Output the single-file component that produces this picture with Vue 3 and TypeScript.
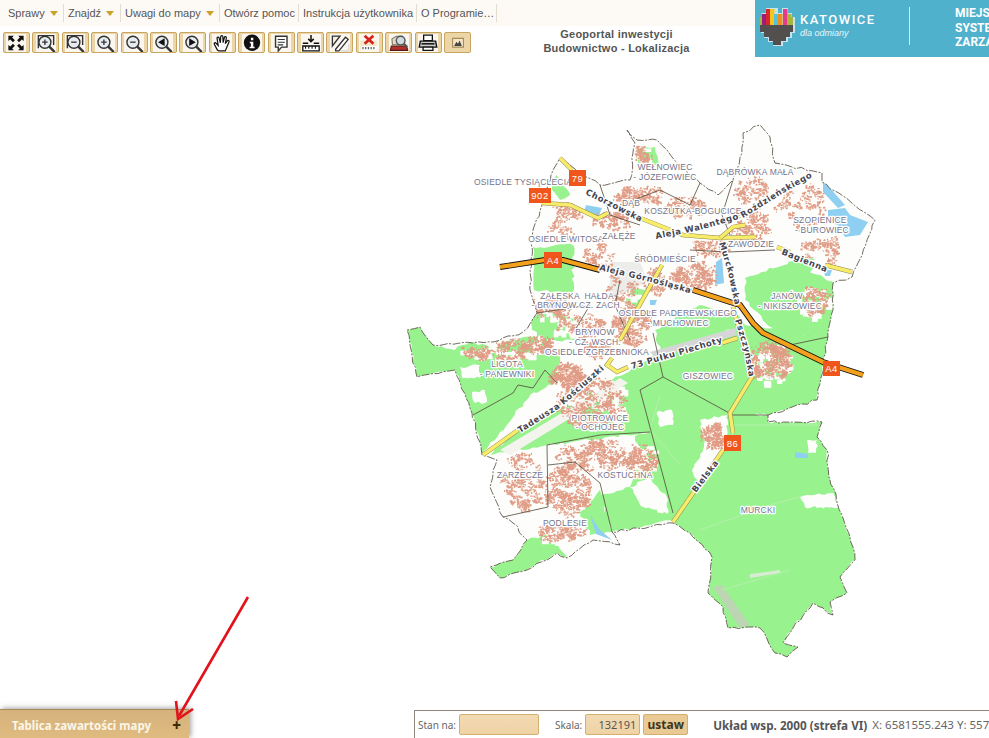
<script setup lang="ts">
interface Shape { d: string; fill?: string; stroke?: string; w?: number }
interface Tool { name: string; shapes: Shape[]; small?: boolean }

const menu = [
  { label: 'Sprawy', arrow: true, w: 64 },
  { label: 'Znajdź', arrow: true, w: 57 },
  { label: 'Uwagi do mapy', arrow: true, w: 99 },
  { label: 'Otwórz pomoc', arrow: false, w: 79 },
  { label: 'Instrukcja użytkownika', arrow: false, w: 118 },
  { label: 'O Programie…', arrow: false, w: 80 },
]

function ring(cx: number, cy: number, r: number) {
  return `M${cx - r} ${cy}a${r} ${r} 0 1 0 ${r * 2} 0a${r} ${r} 0 1 0 ${-r * 2} 0z`
}

const glass: Shape[] = [
  { d: ring(8, 7.5, 5.5), fill: '#e6ecef', stroke: '#333', w: 1.3 },
  { d: 'M12 11.5l5 5', stroke: '#333', w: 2.2 },
]
const plus: Shape = { d: 'M5.5 7.5h5M8 5v5', stroke: '#333', w: 1.2 }
const minus: Shape = { d: 'M5.5 7.5h5', stroke: '#333', w: 1.2 }
const corners: Shape = { d: 'M2 13V1.500h14V10', stroke: '#333', w: 1.3 }

const tools: Tool[] = [
  { name: 'Pełny zasięg', shapes: [
    { d: 'M2 1.500h5L5.500 3.200 8 5.700 6.200 7.500 3.700 5 2 6.500zM16 1.500v5L14.300 5 11.800 7.500 10 5.700l2.500-2.500L11 1.500zM2 15v-5l1.700 1.500L6.200 9 8 10.800 5.500 13.300 7 15zM16 15h-5l1.500-1.700L10 10.800 11.800 9l2.500 2.500L16 10z', fill: '#111' },
  ] },
  { name: 'Powiększ obszar', shapes: [corners, ...glass, plus] },
  { name: 'Pomniejsz obszar', shapes: [corners, ...glass, minus] },
  { name: 'Powiększ', shapes: [...glass, plus] },
  { name: 'Pomniejsz', shapes: [...glass, minus] },
  { name: 'Poprzedni widok', shapes: [...glass, { d: 'M10.500 4v7L4.500 7.500z', fill: '#111' }] },
  { name: 'Następny widok', shapes: [...glass, { d: 'M5.500 4v7l6-3.500z', fill: '#111' }] },
  { name: 'Przesuń', shapes: [
    { d: 'M5 15 2 9.500c-.6-1.300.8-2 1.600-1L5.500 10.500 4.500 4c-.2-1.400 1.600-1.600 1.900-.3L7.500 8 7.800 2.500c.1-1.400 1.900-1.400 2 0L10 8l1.200-4.800c.3-1.300 2-1 1.800.4L12 8.800l1.800-2.500c.8-1 2.200-.2 1.600 1L13 13l-1 2.500H6z', fill: '#fff', stroke: '#111', w: 1.1 },
  ] },
  { name: 'Informacja', shapes: [
    { d: ring(9, 8, 7.500), fill: '#111' },
    { d: 'M8 3.500h2.200v2.200H8zM7 7.200h3.200v4.500h1.200v1.300H6.800v-1.300H8V8.500H7z', fill: '#fff' },
  ] },
  { name: 'Opis', shapes: [
    { d: 'M4 2h10.500v10H9.500l-3 3.500V12H4z', fill: '#fff', stroke: '#333', w: 1.300 },
    { d: 'M6 5h6.500M6 7.500h6.500M6 10h5', stroke: '#333', w: 1 },
  ] },
  { name: 'Pomiar', shapes: [
    { d: 'M9 1v6M6.500 4.500 9 7l2.500-2.500', stroke: '#111', w: 1.400 },
    { d: 'M1.500 8.500h5M11.500 8.500h5', stroke: '#111', w: 1.400 },
    { d: 'M1.500 11h15v4.500h-15z', fill: '#fff', stroke: '#111', w: 1.200 },
    { d: 'M4 11v2.500M7 11v2.500M10 11v2.500M13 11v2.500', stroke: '#111', w: 1 },
  ] },
  { name: 'Edycja', shapes: [
    { d: 'M2 2h7L2 11z', fill: '#f5efe0', stroke: '#333', w: 1.200 },
    { d: 'M5 14 14 3l2.500 2L8 15.500H5z', fill: '#fff', stroke: '#333', w: 1.200 },
    { d: 'M10 15.500h7v-6', stroke: '#ddd', w: 1.500 },
  ] },
  { name: 'Usuń', shapes: [
    { d: 'M1 6h15v9H1z', fill: '#f4e8c8' },
    { d: 'M2 11h14v4H2z', fill: '#fff' },
    { d: 'M3.500 12v2M6 12v2M8.500 12v2M11 12v2M13.500 12v2', stroke: '#666', w: 1.200 },
    { d: 'M5 1.500 13 9M13 1.500 5 9', stroke: '#d8201c', w: 2.500 },
  ] },
  { name: 'Wydruk podglądu', shapes: [
    { d: 'M2 11h14l1 4H1z', fill: '#b1302c', stroke: '#5a1a18', w: 1 },
    { d: 'M2.500 4.500 6.500 2H12l1 8H3z', fill: '#e5dcc8', stroke: '#776', w: 1 },
    { d: ring(10.500, 6, 4), fill: '#cfdbe4', stroke: '#555', w: 1.300 },
    { d: 'M13.500 9l3 3', stroke: '#555', w: 2 },
  ] },
  { name: 'Drukuj', shapes: [
    { d: 'M5 1h8v5H5z', fill: '#fff', stroke: '#111', w: 1.200 },
    { d: 'M2 6.500h14l1 5.500H1z', fill: '#cfcfcf', stroke: '#111', w: 1.300 },
    { d: 'M3 9h12', stroke: '#111', w: 1.400 },
    { d: 'M4.500 12h9v3h-9z', fill: '#fff', stroke: '#111', w: 1.200 },
  ] },
  { name: 'Eksport obrazu', small: true, shapes: [
    { d: 'M4 4h10v8H4z', fill: '#f5e5c4', stroke: '#a58d5a', w: 1 },
    { d: 'M5.500 11 7.500 7 9 9l1.500-3 2 5z', fill: '#444' },
  ] },
]

function seeded(seed: number) {
  let s = seed
  return () => {
    s = (s * 16807) % 2147483647
    return s / 2147483647
  }
}

const rnd = seeded(4711)

// postrzepione krawędzie: dzieli boki wielokąta i lekko przesuwa punkty
function jag(src: string, step = 5, amp = 1.2) {
  const n = src.trim().split(/\s+/).map(Number)
  const out: string[] = []
  for (let i = 0; i < n.length; i += 2) {
    const x = n[i]
    const y = n[i + 1]
    const nx = n[(i + 2) % n.length]
    const ny = n[(i + 3) % n.length]
    const k = Math.max(1, Math.floor(Math.hypot(nx - x, ny - y) / step))
    for (let j = 0; j < k; j++) {
      const ox = j ? (rnd() - 0.5) * 2 * amp : 0
      const oy = j ? (rnd() - 0.5) * 2 * amp : 0
      out.push(`${(x + ((nx - x) * j) / k + ox).toFixed(1)} ${(y + ((ny - y) * j) / k + oy).toFixed(1)}`)
    }
  }
  return out.join(' ')
}

// kontur miasta
const outline = 'M' + jag('627 130 637 140 657 140 667 150 677 163 700 183 718 195 733 180 742 153 743 133 760 125 770 137 775 163 822 173 822 182 875 220 857 265 852 277 833 283 833 310 828 337 817 400 768 415 768 422 822 422 817 437 827 450 830 480 853 547 855 560 840 577 847 593 830 602 833 615 813 603 793 628 783 643 798 647 787 657 775 653 760 628 728 628 723 607 708 593 712 557 690 533 673 523 612 532 620 545 593 540 567 558 557 553 527 570 500 578 490 567 513 560 527 540 513 523 503 517 490 487 497 460 482 455 472 413 455 370 417 377 407 330 420 327 433 345 493 342 523 332 537 313 530 290 533 230 542 205 553 170 560 158 600 185 630 180 635 143') + 'z'

const greens = [
  // Murcki
  '673 523 690 495 723 452 733 433 733 415 768 415 768 422 822 422 817 437 827 450 830 480 853 547 855 560 840 577 847 593 830 602 833 615 813 603 793 628 783 643 798 647 787 657 775 653 760 628 728 628 723 607 708 593 712 557 690 533',
  // środek i Giszowiec
  '490 455 518 430 620 376 660 352 745 325 775 330 828 337 817 400 768 415 733 415 733 433 723 452 690 495 673 520 612 532 600 497 630 487 640 450 635 436 650 432 548 445 500 452',
  // wschód
  '745 278 790 262 835 283 833 310 828 337 775 332 745 300',
  '655 330 700 305 738 315 745 325 660 352',
  // zachód
  '407 330 420 327 433 345 455 350 470 342 492 348 505 342 540 335 560 350 560 380 530 395 500 432 482 455 472 413 455 370 417 377',
  // A4 zachód
  '533 247 573 245 573 292 534 290',
  // Podlesie południe
  '527 540 548 535 567 558 557 553 527 570 500 578 490 567 513 560',
  '580 512 600 490 612 532 590 535',
  // północ
  '636 150 655 147 660 165 640 168',
  '788 262 805 255 820 262 800 280',
  '556 175 570 195 560 200 552 190',
  '627 287 645 290 640 310 628 310',
  '527 317 555 312 575 320 575 340 540 340',
].map((p) => jag(p, 4, 1.6))

const whites = [
  '657 412 672 410 673 425 660 427',
  '630 487 650 478 668 500 668 514 640 505',
  '700 420 727 415 727 445 712 470 700 490 692 470 705 445',
  '800 497 833 493 838 508 805 507',
  '807 440 817 440 816 453 808 453',
  '460 367 480 365 480 378 462 378',
  '472 392 485 390 487 402 475 403',
  '530 405 552 395 562 400 540 418',
].map((p) => jag(p, 3, 1.5))

const waters = [
  '823 180 845 205 838 208 823 192',
  '828 210 845 208 850 215 868 222 860 235 845 237 838 225 828 222',
  '716 262 722 258 724 283 715 285',
  '586 205 602 208 598 218 584 212',
  '590 515 600 530 612 540 596 534',
  '795 452 808 454 808 458 795 458',
  '650 300 657 300 655 305 650 305',
  '824 270 832 270 830 276 825 276',
]

// zabudowa: cx, cy, rx, ry, liczba
const blobs: number[][] = [
  [643, 155, 7, 7, 20], [640, 195, 24, 8, 50], [685, 207, 18, 9, 35], [747, 225, 22, 17, 60],
  [750, 190, 16, 12, 30], [800, 205, 22, 22, 45], [825, 250, 24, 12, 30], [710, 248, 18, 6, 30],
  [695, 276, 22, 12, 70], [655, 280, 14, 14, 25], [632, 325, 18, 18, 90], [575, 325, 24, 10, 40],
  [550, 308, 16, 10, 40], [510, 350, 26, 9, 50], [475, 352, 14, 5, 18], [565, 375, 17, 10, 75],
  [540, 342, 10, 8, 25], [595, 350, 16, 6, 25], [812, 300, 14, 14, 35], [768, 362, 20, 18, 110],
  [590, 402, 32, 22, 140], [595, 455, 36, 14, 90], [640, 460, 14, 14, 50], [522, 482, 20, 26, 70],
  [568, 490, 20, 24, 110], [560, 532, 22, 9, 40], [712, 436, 9, 13, 45], [567, 212, 14, 7, 20],
  [610, 220, 20, 7, 30], [600, 255, 16, 12, 25], [560, 228, 12, 8, 10], [620, 290, 14, 16, 25],
]

interface Block { x: number; y: number; w: number; h: number }

function inBlob(cx: number, cy: number, rx: number, ry: number, spread: number) {
  const a = rnd() * Math.PI * 2
  const r = Math.sqrt(rnd()) * spread
  return { x: cx + Math.cos(a) * r * rx, y: cy + Math.sin(a) * r * ry }
}

const patches: Block[] = []
const blocks: Block[] = []
for (const [cx, cy, rx, ry, n] of blobs) {
  const plates = Math.round((rx * ry) / 8)
  for (let i = 0; i < plates; i++) {
    const p = inBlob(cx, cy, rx, ry, 1.1)
    patches.push({ x: +p.x.toFixed(1), y: +p.y.toFixed(1), w: +(4 + rnd() * 5).toFixed(1), h: +(3 + rnd() * 4).toFixed(1) })
  }
  const clusters = Math.max(3, Math.round((n * 7) / 10))
  for (let c = 0; c < clusters; c++) {
    const p = inBlob(cx, cy, rx, ry, 1.05)
    for (let i = 0; i < 10; i++) {
      blocks.push({
        x: +(p.x + (rnd() - 0.5) * 8).toFixed(1),
        y: +(p.y + (rnd() - 0.5) * 7).toFixed(1),
        w: +(0.8 + rnd() * 1.6).toFixed(1),
        h: +(0.8 + rnd() * 1.2).toFixed(1),
      })
    }
  }
}

const borders = [
  'M663 377 733 415 768 415', 'M663 377 640 390 673 513', 'M663 377 653 333',
  'M473 415 513 393 518 385 533 388 545 370 557 383', 'M547 445 600 435 650 432',
  'M547 445 548 507 503 517', 'M548 465 575 462 600 483 612 532', 'M828 337 790 345 760 332',
  'M537 313 590 305 575 330', 'M620 280 615 305 630 340', 'M700 183 690 205 660 190 620 205',
  'M733 180 722 215 730 235', 'M690 250 728 252 775 250', 'M600 185 610 215 640 225',
]

const faint = ['M700 530 770 505 800 497', 'M735 425 822 425', 'M660 395 650 430 680 465', 'M722 590 790 570']

const yellow = [
  'M560 158 572 170', 'M542 203 570 205 598 218 608 213', 'M640 218 683 235 720 238 755 237',
  'M720 238 733 227 745 225', 'M777 247 790 252', 'M825 265 852 272', 'M662 265 620 340',
  'M733 307 752 377 750 380 730 413 733 433', 'M723 450 673 522', 'M722 343 737 338',
  'M628 367 617 372 607 365 612 358', 'M483 455 518 430',
]

const a4 = ['M500 267 545 260 563 260 600 270', 'M693 290 730 302 740 305 753 323 763 333 823 362 863 375']

const roadLabels = [
  { id: 'r1', text: 'Chorzowska', d: 'M585 194 645 224' },
  { id: 'r2', text: 'Aleja Walentego Roździeńskiego', d: 'M656 239 700 230 745 217 785 192 825 170' },
  { id: 'r3', text: 'Bagienna', d: 'M781 254 835 276' },
  { id: 'r4', text: 'Aleja Górnośląska', d: 'M599 270 650 282 700 296' },
  { id: 'r5', text: 'Murckowska', d: 'M719 243 728 272 738 320' },
  { id: 'r6', text: 'Pszczyńska', d: 'M735 320 744 350 752 392' },
  { id: 'r7', text: '73 Pułku Piechoty', d: 'M632 369 680 355 730 340' },
  { id: 'r8', text: 'Tadeusza Kościuszki', d: 'M520 433 560 408 615 360' },
  { id: 'r9', text: 'Bielska', d: 'M696 493 708 477 725 455' },
]

const labels: [string, number, number][] = [
  ['OSIEDLE TYSIĄCLECIA', 523, 185], ['WEŁNOWIEC', 665, 170], ['- JÓZEFOWIEC', 665, 180],
  ['DĄBRÓWKA MAŁA', 755, 175], ['DĄB', 631, 206], ['KOSZUTKA-BOGUCICE', 693, 214],
  ['SZOPIENICE', 820, 223], ['- BUROWIEC', 822, 233], ['OSIEDLE WITOSA', 566, 242],
  ['ZAŁĘŻE', 619, 239], ['ZAWODZIE', 751, 247], ['ŚRÓDMIEŚCIE', 665, 262],
  ['ZAŁĘSKA  HAŁDA', 577, 299], ['- BRYNÓW CZ. ZACH.', 577, 308], ['OSIEDLE PADEREWSKIEGO', 678, 316],
  ['- MUCHOWIEC', 678, 326], ['JANÓW', 787, 299], ['- NIKISZOWIEC', 790, 309],
  ['BRYNÓW', 595, 335], ['- CZ. WSCH.', 595, 345], ['OSIEDLE ZGRZEBNIOKA', 597, 355],
  ['LIGOTA', 507, 367], ['- PANEWNIKI', 507, 377], ['GISZOWIEC', 708, 379],
  ['PIOTROWICE', 600, 421], ['- OCHOJEC', 600, 430], ['ZARZECZE', 520, 478],
  ['KOSTUCHNA', 625, 478], ['PODLESIE', 565, 526], ['MURCKI', 758, 513],
]

const shields = [
  { t: '79', x: 569, y: 170, w: 17, h: 16 }, { t: '902', x: 529, y: 188, w: 22, h: 15 },
  { t: 'A4', x: 544, y: 252, w: 18, h: 16 }, { t: 'A4', x: 823, y: 361, w: 17, h: 15 },
  { t: '86', x: 724, y: 435, w: 17, h: 16 },
]

const logoBars = [
  { x: 762, y: 14, h: 11, c: '#9c1b7c' }, { x: 766, y: 9, h: 16, c: '#d8262c' },
  { x: 770, y: 9, h: 16, c: '#f6c51f' }, { x: 774, y: 14, h: 11, c: '#58c3d8' },
  { x: 778, y: 14, h: 11, c: '#f28f1c' }, { x: 783, y: 9, h: 16, c: '#e63b8a' },
  { x: 787, y: 14, h: 11, c: '#a9b63c' },
]
</script>

<template>
  <div class="page">
    <header class="top">
      <div class="top-left">
        <nav class="menu">
          <a
            v-for="m in menu"
            :key="m.label"
            class="menu-item"
            :style="{ width: m.w + 'px' }"
          >
            {{ m.label }}<i v-if="m.arrow" class="caret"></i>
          </a>
        </nav>
        <div class="tool-row">
          <div class="toolbar">
            <button v-for="t in tools" :key="t.name" class="tool" :title="t.name">
              <svg width="20" height="18" viewBox="0 0 18 16.500" :class="{ plate: !t.small }">
                <path
                  v-for="(s, i) in t.shapes"
                  :key="i"
                  :d="s.d"
                  :fill="s.fill ?? 'none'"
                  :stroke="s.stroke ?? 'none'"
                  :stroke-width="s.w ?? 0"
                />
              </svg>
            </button>
          </div>
          <div class="title">Geoportal inwestycji<br />Budownictwo - Lokalizacja</div>
        </div>
      </div>

      <div class="banner">
        <svg class="logo" width="40" height="42" viewBox="757 6 40 42">
          <path d="M761 13h5v-5h12v5h4v-5h6v5h4v4h3v16h-3v5h-4v4h-5v4h-10v-4h-5v-4h-4v-5h-3V17h3z" fill="#eef6f8" opacity=".75" />
          <path d="M760 17h2v8h-2zM793 17h-6v8h6z" fill="#a9b63c" />
          <rect v-for="b in logoBars" :key="b.x" :x="b.x" :y="b.y" width="4.500" :height="b.h" :fill="b.c" />
          <path d="M760 25h33v7h-3v5h-4v4h-5v4h-8v-4h-4v-4h-5v-5h-4z" fill="#544f4f" />
        </svg>
        <div class="brand">
          <span class="brand-name">KATOWICE</span>
          <span class="brand-sub">dla odmiany</span>
        </div>
        <i class="divider"></i>
        <div class="system">MIEJSKI<br />SYSTEM<br />ZARZĄDZANIA</div>
      </div>
    </header>

    <main class="map">
      <svg width="989" height="652" viewBox="0 57 989 652" class="map-svg">
        <defs>
          <path v-for="r in roadLabels" :id="r.id" :key="r.id" :d="r.d" />
          <clipPath id="city"><path :d="outline" /></clipPath>
        </defs>

        <path :d="outline" fill="#fdfefb" />
        <g clip-path="url(#city)">
          <polygon v-for="g in greens" :key="g" :points="g" fill="#98f28e" />
          <rect
            v-for="(b, i) in patches"
            :key="i"
            :x="b.x"
            :y="b.y"
            :width="b.w"
            :height="b.h"
            fill="#fdfefb"
          />
          <polygon v-for="w in whites" :key="w" :points="w" fill="#fdfefb" />
          <polygon v-for="w in waters" :key="w" :points="w" fill="#8fd0f2" />
          <path d="M608 300 648 282 640 262 612 262z" fill="#dcdcdc" opacity=".5" />
          <path d="M650 352 735 328 737 335 655 358z" fill="#d6d6d6" />
          <path d="M713 587 722 585 750 625 740 628z" fill="#bcd6b4" />
          <path d="M750 574 780 570 780 573 750 578z" fill="#d8ecd4" />
          <path d="M500 450 620 378 628 383 510 455z" fill="#f4f4ee" />
          <path v-for="f in faint" :key="f" :d="f" class="faint" />
          <rect
            v-for="(b, i) in blocks"
            :key="i"
            :x="b.x"
            :y="b.y"
            :width="b.w"
            :height="b.h"
            fill="#e09c85"
          />
          <path v-for="b in borders" :key="b" :d="b" class="border" />
        </g>
        <path :d="outline" class="outline" />

        <g v-for="r in yellow" :key="r">
          <path :d="r" class="case" />
          <path :d="r" class="yellow" />
        </g>
        <g v-for="r in a4" :key="r">
          <path :d="r" class="case-a4" />
          <path :d="r" class="a4" />
        </g>

        <text v-for="l in labels" :key="l[0]" :x="l[1]" :y="l[2]" class="place">{{ l[0] }}</text>
        <text v-for="r in roadLabels" :key="r.id" class="road-name">
          <textPath :href="`#${r.id}`">{{ r.text }}</textPath>
        </text>

        <g v-for="s in shields" :key="s.x">
          <rect :x="s.x" :y="s.y" :width="s.w" :height="s.h" fill="#f0561b" />
          <text :x="s.x + s.w / 2" :y="s.y + s.h / 2 + 3.500" class="shield">{{ s.t }}</text>
        </g>
      </svg>
    </main>

    <footer class="bottom">
      <div class="legend">
        <span>Tablica zawartości mapy</span>
        <b class="legend-plus">+</b>
      </div>
      <div class="status">
        <label class="field-label">Stan na:</label>
        <input class="field date" value="" />
        <label class="field-label scale-label">Skala:</label>
        <input class="field scale" value="132191" />
        <button class="set">ustaw</button>
        <span class="coord-title">Układ wsp. 2000 (strefa VI)</span>
        <span class="coord">X: 6581555.243 Y: 5576710.120</span>
      </div>
    </footer>

    <svg class="pointer" width="100" height="135" viewBox="160 590 100 135">
      <path d="M248 597 179 716" fill="none" stroke="#e1121c" stroke-width="2.600" />
      <path d="M176 701 178 719 193 709" fill="none" stroke="#e1121c" stroke-width="2.600" />
    </svg>
  </div>
</template>

<style scoped>
.page {
  position: relative;
  width: 989px;
  height: 738px;
  display: flex;
  flex-direction: column;
  overflow: hidden;
  background: #fff;
  font-family: "Liberation Sans", Arial, sans-serif;
}

.top {
  display: flex;
  height: 57px;
  flex: none;
}

.top-left {
  width: 755px;
  flex: none;
}

.menu {
  display: flex;
  height: 26px;
  align-items: center;
  background: #fdfaf5;
}

.menu-item {
  display: flex;
  align-items: center;
  box-sizing: border-box;
  height: 18px;
  padding-left: 4px;
  border-right: 1px solid #e3ddd2;
  color: #555;
  font-size: 11px;
  white-space: nowrap;
}

.menu-item:first-child {
  padding-left: 8px;
}

.caret {
  width: 0;
  height: 0;
  margin-left: 5px;
  border-left: 4px solid transparent;
  border-right: 4px solid transparent;
  border-top: 5px solid #c9a227;
}

.tool-row {
  display: flex;
}

.toolbar {
  display: flex;
  gap: 2.500px;
  padding: 6px 0 0 3px;
  width: 468px;
  flex: none;
}

.tool {
  display: flex;
  align-items: center;
  justify-content: center;
  width: 27px;
  height: 21px;
  padding: 0;
  border: 1px solid #c9a660;
  border-radius: 2px;
  background: #ecd5a6;
}

.plate {
  background: #fbf7ee;
}

.title {
  flex: 1;
  margin-top: 1px;
  text-align: center;
  padding-left: 7px;
  color: #555;
  font-size: 11px;
  line-height: 14px;
  font-weight: 700;
  letter-spacing: 0.25px;
}

.banner {
  flex: 1;
  display: flex;
  align-items: flex-start;
  overflow: hidden;
  background: #50b1cd;
  color: #fff;
}

.logo {
  flex: none;
  margin: 6px 0 0 2px;
}

.brand {
  display: flex;
  flex-direction: column;
  width: 109px;
  flex: none;
  margin: 12px 0 0 3px;
}

.brand-name {
  font-family: "Roboto", sans-serif;
  font-size: 13px;
  font-weight: 500;
  letter-spacing: 1.500px;
  line-height: 15px;
}

.brand-sub {
  margin-top: 1px;
  color: #eaf6f9;
  font-size: 9px;
  font-style: italic;
}

.divider {
  flex: none;
  width: 1px;
  height: 38px;
  margin-top: 7px;
  background: #d5eef5;
}

.system {
  flex: none;
  margin: 6px 0 0 45px;
  font-family: "Roboto", sans-serif;
  font-size: 12px;
  font-weight: 700;
  line-height: 14.500px;
  white-space: nowrap;
}

.map {
  flex: 1;
  min-height: 0;
}

.map-svg {
  display: block;
}

.outline {
  fill: none;
  stroke: #4e4338;
  stroke-width: 0.8;
  stroke-dasharray: 8 1.500 2 1.500;
}

.border {
  fill: none;
  stroke: #54483a;
  stroke-width: 0.8;
}

.faint {
  fill: none;
  stroke: #b5f0ab;
  stroke-width: 1;
}

.case {
  fill: none;
  stroke: #94894f;
  stroke-width: 4.500;
}

.yellow {
  fill: none;
  stroke: #f6ec6a;
  stroke-width: 3.500;
}

.case-a4 {
  fill: none;
  stroke: #111;
  stroke-width: 6;
}

.a4 {
  fill: none;
  stroke: #f3a01d;
  stroke-width: 4.200;
}

.place {
  fill: #74748a;
  font-size: 8.500px;
  letter-spacing: 0.200px;
  text-anchor: middle;
  white-space: pre;
  paint-order: stroke;
  stroke: #fff;
  stroke-width: 2.500px;
  stroke-linejoin: round;
}

.road-name {
  fill: #454550;
  font-family: "DejaVu Sans", sans-serif;
  font-size: 8.500px;
  font-weight: 700;
  letter-spacing: 0.500px;
  paint-order: stroke;
  stroke: #fff;
  stroke-width: 2.500px;
  stroke-linejoin: round;
}

.shield {
  fill: #fff;
  font-size: 9.500px;
  letter-spacing: 0.500px;
  text-anchor: middle;
}

.bottom {
  display: flex;
  align-items: flex-end;
  justify-content: space-between;
  flex: none;
  height: 29px;
}

.legend {
  display: flex;
  align-items: center;
  justify-content: space-between;
  box-sizing: border-box;
  width: 189px;
  height: 29px;
  padding: 3px 8px 0 12px;
  border-top: 1px solid #a98a5a;
  background: linear-gradient(#d5b27c, #dfbb80);
  box-shadow: 2px -1px 5px rgba(90, 90, 90, 0.55);
  color: #fbf6e8;
  font-family: "Noto Sans", sans-serif;
  font-size: 11.500px;
  font-weight: 700;
}

.legend-plus {
  color: #3f2a05;
  font-size: 15px;
  line-height: 12px;
  margin-top: -2px;
}

.status {
  display: flex;
  align-items: center;
  box-sizing: border-box;
  width: 575px;
  height: 28px;
  padding-left: 3px;
  border-left: 1px solid #908a7c;
  border-top: 1px solid #908a7c;
  overflow: hidden;
  white-space: nowrap;
}

.status > * {
  flex: none;
}

.field-label {
  color: #666;
  font-family: "Noto Sans", sans-serif;
  font-size: 10px;
}

.field {
  box-sizing: border-box;
  height: 21px;
  padding: 0 3px;
  border: 1px solid #d4b070;
  border-radius: 2px;
  background: linear-gradient(#f2dab3, #efd3a5);
  color: #555;
  font-family: "Noto Sans", sans-serif;
  font-size: 11px;
  text-align: right;
}

.date {
  width: 80px;
  margin-left: 3px;
}

.scale-label {
  margin-left: 16px;
}

.scale {
  width: 55px;
  margin-left: 3px;
}

.set {
  box-sizing: border-box;
  width: 45px;
  height: 21px;
  margin-left: 3px;
  padding: 0;
  border: 1px solid #d4b070;
  border-radius: 2px;
  background: #e9c994;
  color: #3f3522;
  font-family: "Noto Sans", sans-serif;
  font-size: 12px;
  font-weight: 700;
}

.coord-title {
  margin-left: 25px;
  color: #555;
  font-family: "Noto Sans", sans-serif;
  font-size: 11.700px;
  font-weight: 700;
}

.coord {
  margin-left: 5px;
  color: #666;
  font-family: "Noto Sans", sans-serif;
  font-size: 11.500px;
}

.pointer {
  position: absolute;
  left: 160px;
  top: 590px;
}
</style>
